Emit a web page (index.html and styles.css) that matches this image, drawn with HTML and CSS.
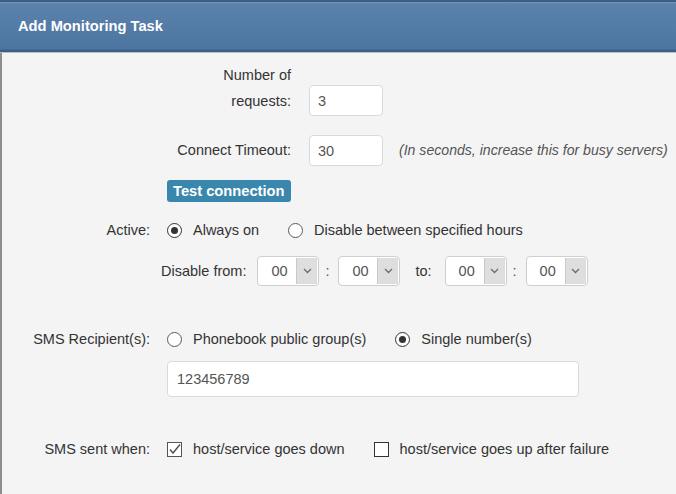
FILE: index.html
```html
<!DOCTYPE html>
<html lang="en">
<head>
<meta charset="utf-8">
<title>Add Monitoring Task</title>
<link rel="stylesheet" href="styles.css">
</head>
<body>
<div class="dialog">
  <div class="dialog-header">
    <h1 class="dialog-title">Add Monitoring Task</h1>
  </div>
  <div class="dialog-body">
    <div class="form-row row-requests">
      <label class="label-wide">Number of<br>requests:</label>
      <input class="text-input short" type="text" value="3">
    </div>
    <div class="form-row row-timeout">
      <label class="label-wide">Connect Timeout:</label>
      <input class="text-input short" type="text" value="30">
      <span class="hint">(In seconds, increase this for busy servers)</span>
    </div>
    <div class="row-button">
      <button class="btn-test" type="button">Test connection</button>
    </div>
    <div class="form-row row-active">
      <span class="label-narrow">Active:</span>
      <label class="choice"><span class="radio checked"></span>Always on</label>
      <label class="choice"><span class="radio"></span>Disable between specified hours</label>
    </div>
    <div class="row-disable">
      <span class="disable-label">Disable from:</span>
      <div class="select"><span class="select-value">00</span><span class="select-btn"><svg width="9" height="6" viewBox="0 0 9 6"><path d="M1 1 L4.5 4.5 L8 1" fill="none" stroke="#6b6b6b" stroke-width="1.3"/></svg></span></div>
      <span class="colon">:</span>
      <div class="select"><span class="select-value">00</span><span class="select-btn"><svg width="9" height="6" viewBox="0 0 9 6"><path d="M1 1 L4.5 4.5 L8 1" fill="none" stroke="#6b6b6b" stroke-width="1.3"/></svg></span></div>
      <span class="to">to:</span>
      <div class="select"><span class="select-value">00</span><span class="select-btn"><svg width="9" height="6" viewBox="0 0 9 6"><path d="M1 1 L4.5 4.5 L8 1" fill="none" stroke="#6b6b6b" stroke-width="1.3"/></svg></span></div>
      <span class="colon">:</span>
      <div class="select"><span class="select-value">00</span><span class="select-btn"><svg width="9" height="6" viewBox="0 0 9 6"><path d="M1 1 L4.5 4.5 L8 1" fill="none" stroke="#6b6b6b" stroke-width="1.3"/></svg></span></div>
    </div>
    <div class="form-row row-sms">
      <span class="label-narrow">SMS Recipient(s):</span>
      <label class="choice"><span class="radio"></span>Phonebook public group(s)</label>
      <label class="choice"><span class="radio checked"></span>Single number(s)</label>
    </div>
    <div class="row-number">
      <input class="text-input long" type="text" value="123456789">
    </div>
    <div class="form-row row-sent">
      <span class="label-narrow">SMS sent when:</span>
      <label class="choice"><span class="checkbox checked"><svg width="13" height="13" viewBox="0 0 13 13"><path d="M2 6.5 L5 10 L12 1.5" fill="none" stroke="#555" stroke-width="1.5"/></svg></span>host/service goes down</label>
      <label class="choice"><span class="checkbox"></span>host/service goes up after failure</label>
    </div>
  </div>
</div>
</body>
</html>
```

FILE: styles.css
```css
* {
  box-sizing: border-box;
}

html,
body {
  margin: 0;
  padding: 0;
}

body {
  width: 676px;
  height: 494px;
  overflow: hidden;
  font-family: "Liberation Sans", Arial, sans-serif;
  font-size: 14.5px;
  color: #333;
  background: #f4f4f4;
}

.dialog {
  width: 676px;
  height: 494px;
}

.dialog-header {
  height: 53px;
  padding-left: 18px;
  background: linear-gradient(to bottom,
    #3e5f85 0, #3e5f85 2px,
    #6c8fb4 2px, #6c8fb4 3px,
    #5a82ab 4px, #4c75a1 49px,
    #3e5f85 50px, #3e5f85 52px,
    #b4bfcb 52px, #b4bfcb 53px);
}

.dialog-title {
  margin: 0;
  font-size: 14.7px;
  font-weight: bold;
  line-height: 53px;
  color: #fff;
}

.dialog-body {
  height: 441px;
  border-left: 2px solid #8e8e8e;
  padding-top: 9px;
}

.form-row {
  display: flex;
  align-items: center;
}

.label-wide {
  width: 289px;
  margin-right: 18px;
  text-align: right;
}

.row-requests {
  align-items: flex-end;
}

.row-requests .label-wide {
  line-height: 26px;
  padding-bottom: 2px;
}

.text-input {
  height: 31px;
  margin: 0;
  padding: 0 8px;
  border: 1px solid #dadada;
  border-radius: 4px;
  background: #fff;
  font-family: "Liberation Sans", Arial, sans-serif;
  font-size: 14.5px;
  color: #555;
  outline: none;
}

.short {
  width: 74px;
}

.row-timeout {
  margin-top: 19px;
  line-height: 31px;
}

.hint {
  margin-left: 16px;
  font-size: 14.1px;
  font-style: italic;
  color: #555;
}

.row-button {
  margin-top: 14px;
  padding-left: 165px;
  height: 22px;
}

.btn-test {
  display: block;
  height: 22px;
  margin: 0;
  padding: 0 6px;
  border: 0;
  border-radius: 3px;
  background: #3a87ad;
  color: #fff;
  font-family: "Liberation Sans", Arial, sans-serif;
  font-size: 14.7px;
  font-weight: bold;
  line-height: 22px;
}

.row-active {
  margin-top: 18px;
  height: 20px;
}

.label-narrow {
  width: 148px;
  margin-right: 17px;
  text-align: right;
  line-height: 20px;
}

.choice {
  display: flex;
  align-items: center;
  line-height: 20px;
  margin-right: 29px;
}

.radio {
  display: flex;
  align-items: center;
  justify-content: center;
  width: 15px;
  height: 15px;
  margin-right: 11px;
  border: 1px solid #5a5a5a;
  border-radius: 50%;
  background: #fff;
}

.radio.checked {
  border-color: #333;
}

.radio.checked::after {
  content: "";
  width: 7px;
  height: 7px;
  border-radius: 50%;
  background: #333;
}

.checkbox {
  display: flex;
  align-items: center;
  justify-content: center;
  width: 15px;
  height: 15px;
  margin-right: 11px;
  border: 1px solid #333;
  background: #fff;
}

.checkbox.checked {
  border-color: #555;
}

.row-disable {
  display: flex;
  align-items: center;
  height: 30px;
  margin-top: 16px;
  padding-left: 159px;
}

.disable-label {
  margin-right: 11px;
}

.select {
  display: flex;
  width: 62px;
  height: 30px;
  padding: 1px 1px 1px 0;
  border: 1px solid #cfcfcf;
  border-radius: 4px;
  background: #fff;
}

.select-value {
  flex: 1;
  padding-left: 13px;
  line-height: 26px;
  color: #555;
}

.select-btn {
  display: flex;
  align-items: center;
  justify-content: center;
  width: 21px;
  background: #dedede;
  border-left: 1px solid #c9c9c9;
}

.colon {
  margin: 0 9px 0 6px;
  color: #555;
}

.to {
  margin: 0 13px 0 15px;
}

.row-sms {
  margin-top: 43px;
  height: 20px;
}

.row-number {
  margin-top: 12px;
  padding-left: 165px;
}

.long {
  width: 412px;
  height: 36px;
  padding-left: 9px;
}

.row-sent {
  margin-top: 42px;
  height: 20px;
}
```
